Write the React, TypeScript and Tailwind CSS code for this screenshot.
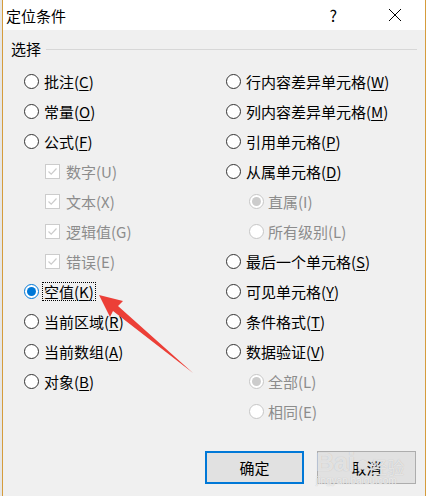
import React from 'react';

type Item = {
  label: string;
  key: string;
  kind: 'radio' | 'check' | 'sub';
  checked?: boolean;
  disabled?: boolean;
  focus?: boolean;
};

const leftItems: Item[] = [
  { label: '批注', key: 'C', kind: 'radio' },
  { label: '常量', key: 'O', kind: 'radio' },
  { label: '公式', key: 'F', kind: 'radio' },
  { label: '数字', key: 'U', kind: 'check', checked: true, disabled: true },
  { label: '文本', key: 'X', kind: 'check', checked: true, disabled: true },
  { label: '逻辑值', key: 'G', kind: 'check', checked: true, disabled: true },
  { label: '错误', key: 'E', kind: 'check', checked: true, disabled: true },
  { label: '空值', key: 'K', kind: 'radio', checked: true, focus: true },
  { label: '当前区域', key: 'R', kind: 'radio' },
  { label: '当前数组', key: 'A', kind: 'radio' },
  { label: '对象', key: 'B', kind: 'radio' },
];

const rightItems: Item[] = [
  { label: '行内容差异单元格', key: 'W', kind: 'radio' },
  { label: '列内容差异单元格', key: 'M', kind: 'radio' },
  { label: '引用单元格', key: 'P', kind: 'radio' },
  { label: '从属单元格', key: 'D', kind: 'radio' },
  { label: '直属', key: 'I', kind: 'sub', checked: true, disabled: true },
  { label: '所有级别', key: 'L', kind: 'sub', disabled: true },
  { label: '最后一个单元格', key: 'S', kind: 'radio' },
  { label: '可见单元格', key: 'Y', kind: 'radio' },
  { label: '条件格式', key: 'T', kind: 'radio' },
  { label: '数据验证', key: 'V', kind: 'radio' },
  { label: '全部', key: 'L', kind: 'sub', checked: true, disabled: true },
  { label: '相同', key: 'E', kind: 'sub', disabled: true },
];

function Radio({ checked, disabled }: { checked?: boolean; disabled?: boolean }) {
  if (disabled) {
    return (
      <span className="flex h-[15px] w-[15px] shrink-0 items-center justify-center rounded-full border border-[#c6c6c6] bg-white">
        {checked && <span className="h-[9px] w-[9px] rounded-full bg-[#cccccc]" />}
      </span>
    );
  }
  if (checked) {
    return (
      <span className="flex h-[15px] w-[15px] shrink-0 items-center justify-center rounded-full border border-[#0078d7] bg-white">
        <span className="h-[9px] w-[9px] rounded-full bg-[#0078d7]" />
      </span>
    );
  }
  return <span className="h-[15px] w-[15px] shrink-0 rounded-full border border-[#333333] bg-white" />;
}

function Check() {
  return (
    <span className="flex h-[15px] w-[15px] shrink-0 items-center justify-center border border-[#cccccc] bg-white">
      <svg width="11" height="11" viewBox="0 0 11 11">
        <path d="M1.5 5.5 L4.2 8.2 L9.5 2.5" fill="none" stroke="#cccccc" strokeWidth="1.2" />
      </svg>
    </span>
  );
}

function Row({ item }: { item: Item }) {
  const text = (
    <span className={item.disabled ? 'text-[#8c8c8c]' : 'text-black'}>
      {item.label}(
      <span className={item.disabled ? '' : 'underline underline-offset-2'}>{item.key}</span>)
    </span>
  );
  return (
    <div className="flex h-[30px] items-center">
      {item.kind === 'check' && (
        <div className="ml-[21px] flex items-center gap-[6px]">
          <Check />
          {text}
        </div>
      )}
      {item.kind === 'sub' && (
        <div className="ml-[23px] flex items-center gap-[4px]">
          <Radio checked={item.checked} disabled />
          {text}
        </div>
      )}
      {item.kind === 'radio' && (
        <div className="flex items-center gap-[3px]">
          <Radio checked={item.checked} />
          <span className={item.focus ? 'border border-dotted border-black px-[1px] py-[1px]' : 'px-[2px]'}>
            {text}
          </span>
        </div>
      )}
    </div>
  );
}

export default function App() {
  return (
    <div className="relative flex h-[496px] w-[430px] overflow-hidden font-['Noto_Sans_CJK_SC',sans-serif] text-[15px] leading-none">
      <div className="w-[2px] bg-[#e6e6e6]" />
      <div className="flex w-[424px] flex-col border-x border-[#d59c3c] bg-[#f0f0f0]">
        {/* 标题栏 */}
        <div className="flex h-[30px] items-center bg-white pl-[3px]">
          <span className="text-[15px] text-black">定位条件</span>
          <span className="ml-auto mr-[51px] text-[16px] text-black">?</span>
          <svg width="14" height="14" viewBox="0 0 14 14" className="mr-[23px]">
            <path d="M1 1 L13 13 M13 1 L1 13" stroke="#000" strokeWidth="1" />
          </svg>
        </div>

        {/* 选择 */}
        <div className="mt-[8px] flex h-[20px] items-center pl-[8px] pr-[8px]">
          <span className="text-black">选择</span>
          <div className="ml-[5px] mt-[2px] h-px flex-1 bg-[#d7d7d7]" />
        </div>

        <div className="mt-[8px] flex pl-[21px]">
          <div className="w-[202px]">
            {leftItems.map((it, i) => (
              <Row key={i} item={it} />
            ))}
          </div>
          <div className="flex-1">
            {rightItems.map((it, i) => (
              <Row key={i} item={it} />
            ))}
          </div>
        </div>

        <div className="mt-[25px] flex justify-end gap-[13px] pr-[9px]">
          <button className="flex h-[33px] w-[99px] items-center justify-center border-2 border-[#0078d7] bg-[#e1e1e1] text-black">
            确定
          </button>
          <button className="flex h-[33px] w-[99px] items-center justify-center border border-[#adadad] bg-[#e1e1e1] text-black">
            取消
          </button>
        </div>
      </div>
      <div className="flex-1 bg-white" />

      {/* 水印 */}
      <div className="pointer-events-none absolute left-[316px] top-[450px] flex flex-col items-start">
        <div className="flex items-end font-['Liberation_Sans',sans-serif] text-[25px] font-bold text-white/60 [text-shadow:0_0_1px_#b5b5b5]">
          Bai<span className="mx-[1px] text-[22px]">●</span>
          <span className="font-['Noto_Sans_CJK_SC',sans-serif] text-[17px] font-normal">经验</span>
        </div>
        <span className="mt-[1px] font-['Liberation_Sans',sans-serif] text-[10px] text-white/70 [text-shadow:0_0_1px_#b5b5b5]">
          jingyan.baidu.com
        </span>
      </div>

      {/* 红色箭头 */}
      <svg className="pointer-events-none absolute left-0 top-0" width="430" height="496">
        <polygon points="99,295 123,301 118,306 193,373 113,311 110,317" fill="#ec3f37" />
      </svg>
    </div>
  );
}
